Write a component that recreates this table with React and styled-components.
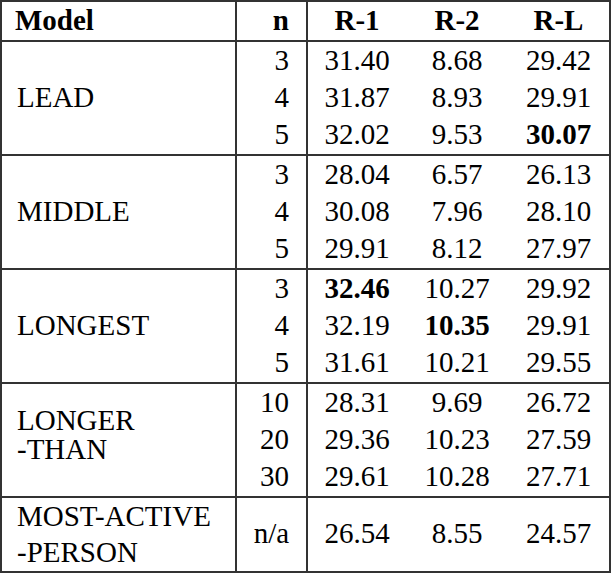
import React from "react";
import styled, { createGlobalStyle } from "styled-components";

const serif = '"Liberation Serif", "Times New Roman", Times, serif';

const GlobalStyle = createGlobalStyle`
  html, body {
    margin: 0;
    padding: 0;
    background: #ffffff;
    font-family: ${serif};
  }
`;

const groups = [
  {
    model: ["LEAD"],
    rows: [
      ["3", "31.40", "8.68", "29.42"],
      ["4", "31.87", "8.93", "29.91"],
      ["5", "32.02", "9.53", "30.07"],
    ],
    bold: [[2, 3]],
  },
  {
    model: ["MIDDLE"],
    rows: [
      ["3", "28.04", "6.57", "26.13"],
      ["4", "30.08", "7.96", "28.10"],
      ["5", "29.91", "8.12", "27.97"],
    ],
    bold: [],
  },
  {
    model: ["LONGEST"],
    rows: [
      ["3", "32.46", "10.27", "29.92"],
      ["4", "32.19", "10.35", "29.91"],
      ["5", "31.61", "10.21", "29.55"],
    ],
    bold: [
      [0, 1],
      [1, 2],
    ],
  },
  {
    model: ["LONGER", "-THAN"],
    tight: true,
    rows: [
      ["10", "28.31", "9.69", "26.72"],
      ["20", "29.36", "10.23", "27.59"],
      ["30", "29.61", "10.28", "27.71"],
    ],
    bold: [],
  },
];

const Table = styled.table({
  width: "611px",
  tableLayout: "fixed",
  borderCollapse: "separate",
  borderSpacing: 0,
  border: "2px solid #333",
  fontFamily: serif,
  fontSize: "29px",
  color: "#000",
});

const Col = styled.col(({ $w }) => ({
  width: `${$w}px`,
}));

const HeadCell = styled.th(({ $align, $divider }) => ({
  boxSizing: "border-box",
  height: "37.7px",
  padding: 0,
  paddingLeft: $align === "left" ? "13px" : 0,
  paddingRight: $align === "right" ? "17px" : 0,
  lineHeight: "37.7px",
  fontFamily: serif,
  fontSize: "29px",
  fontWeight: 700,
  textAlign: $align || "center",
  borderBottom: "2px solid #333",
  borderRight: $divider ? "2px solid #333" : "none",
}));

const Group = styled.tbody`
  & + & > tr:first-child > td {
    border-top: 2px solid #333;
  }
`;

const Row = styled.tr({
  height: "37.33px",
});

const Cell = styled.td({
  boxSizing: "border-box",
  padding: 0,
  fontFamily: serif,
  fontSize: "29px",
  lineHeight: "37.33px",
});

const ModelCell = styled(Cell)(({ $tight }) => ({
  verticalAlign: "middle",
  textAlign: "left",
  paddingLeft: "15px",
  borderRight: "2px solid #333",
  lineHeight: $tight ? "29px" : "36.5px",
  paddingBottom: $tight ? "10px" : 0,
}));

const NCell = styled(Cell)(({ $center }) => ({
  textAlign: $center ? "center" : "right",
  paddingRight: $center ? 0 : "17px",
  borderRight: "2px solid #333",
}));

const ValueCell = styled(Cell)(({ $bold }) => ({
  textAlign: "center",
  fontWeight: $bold ? 700 : 400,
}));

const LastRow = styled.tr({
  height: "73px",
});

function isBold(group, r, c) {
  return group.bold.some(([br, bc]) => br === r && bc === c);
}

export default function App() {
  return (
    <>
      <GlobalStyle />
      <Table>
        <colgroup>
          <Col $w={235} />
          <Col $w={71} />
          <Col $w={98} />
          <Col $w={102} />
          <Col $w={101} />
        </colgroup>
        <thead>
          <tr>
            <HeadCell $align="left" $divider>
              Model
            </HeadCell>
            <HeadCell $align="right" $divider>
              n
            </HeadCell>
            <HeadCell>R-1</HeadCell>
            <HeadCell>R-2</HeadCell>
            <HeadCell>R-L</HeadCell>
          </tr>
        </thead>
        {groups.map((group, gi) => (
          <Group key={gi}>
            {group.rows.map((row, ri) => (
              <Row key={ri}>
                {ri === 0 && (
                  <ModelCell rowSpan={group.rows.length} $tight={group.tight}>
                    {group.model.map((line, li) => (
                      <React.Fragment key={li}>
                        {li > 0 && <br />}
                        {line}
                      </React.Fragment>
                    ))}
                  </ModelCell>
                )}
                <NCell>{row[0]}</NCell>
                {row.slice(1).map((v, ci) => (
                  <ValueCell key={ci} $bold={isBold(group, ri, ci + 1)}>
                    {v}
                  </ValueCell>
                ))}
              </Row>
            ))}
          </Group>
        ))}
        <Group>
          <LastRow>
            <ModelCell>
              MOST-ACTIVE
              <br />
              -PERSON
            </ModelCell>
            <NCell $center>n/a</NCell>
            <ValueCell>26.54</ValueCell>
            <ValueCell>8.55</ValueCell>
            <ValueCell>24.57</ValueCell>
          </LastRow>
        </Group>
      </Table>
    </>
  );
}
